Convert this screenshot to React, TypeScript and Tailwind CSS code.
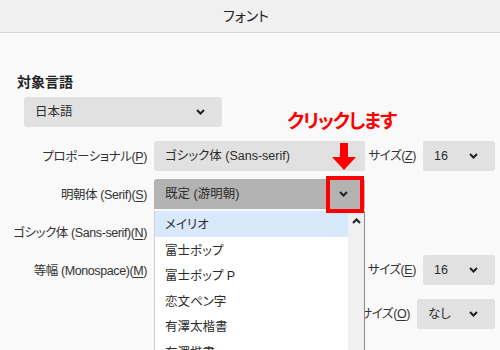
import type { ReactNode } from "react";

const FONT = { fontFamily: '"Liberation Sans", "Noto Sans CJK JP", sans-serif' };

function Chevron({ up = false }: { up?: boolean }) {
  return (
    <svg width="9" height="6" viewBox="0 0 9 6" className={up ? "rotate-180" : ""}>
      <path d="M1 1 L4.5 4.5 L8 1" fill="none" stroke="#222" strokeWidth="2" />
    </svg>
  );
}

function Select({
  value,
  className = "",
  active = false,
}: {
  value?: string;
  className?: string;
  active?: boolean;
}) {
  return (
    <div
      className={
        "h-[30px] flex items-center justify-between rounded-[3px] pl-[11px] pr-[17px] text-[12.5px] text-[#2b2b2b] " +
        (active ? "bg-[#b3b3b3] rounded-b-none" : "bg-[#e1e1e1]") +
        " " +
        className
      }
    >
      <span>{value}</span>
      <Chevron />
    </div>
  );
}

function Label({ text, k, className = "" }: { text: string; k: string; className?: string }) {
  return (
    <span className={"text-[12.5px] tracking-[-0.4px] text-[#333] whitespace-nowrap " + className}>
      {text}(<u className="underline-offset-2">{k}</u>)
    </span>
  );
}

function Row({ children, className = "" }: { children: ReactNode; className?: string }) {
  return <div className={"flex items-center h-[30px] pr-[5px] " + className}>{children}</div>;
}

const FONTS = ["メイリオ", "富士ポップ", "富士ポップ P", "恋文ペン字", "有澤太楷書", "有澤楷書"];

export default function App() {
  return (
    <div
      className="relative w-[500px] h-[350px] overflow-hidden bg-[#f9f9f9] [font-feature-settings:'palt']"
      style={FONT}
    >
      <div className="h-[33px] flex items-center justify-center bg-[#f0f0f0] border-b border-[#d6d6d6] text-[14px] text-[#222] pr-[8px]">
        フォント
      </div>

      <div className="pt-[38px]">
        <div className="pl-[17px] text-[14px] font-bold text-[#222] leading-[22px]">対象言語</div>
        <div className="pl-[24px] mt-[4px]">
          <Select value="日本語" className="w-[198px] pr-[15px]" />
        </div>

        <div className="mt-[14px] flex flex-col gap-[8px]">
          <Row>
            <div className="w-[147px] text-right">
              <Label text="プロポーショナル" k="P" />
            </div>
            <Select value="ゴシック体 (Sans-serif)" className="ml-[7px] w-[211px]" />
            <Label text="サイズ" k="Z" className="ml-auto" />
            <Select value="16" className="ml-[7px] w-[72px]" />
          </Row>
          <Row>
            <div className="w-[147px] text-right">
              <Label text="明朝体 (Serif)" k="S" />
            </div>
            <Select value="既定 (游明朝)" active className="ml-[7px] w-[211px]" />
          </Row>
          <Row>
            <div className="w-[147px] text-right">
              <Label text="ゴシック体 (Sans-serif)" k="N" />
            </div>
            <Select className="ml-[7px] w-[211px]" />
          </Row>
          <Row>
            <div className="w-[147px] text-right">
              <Label text="等幅 (Monospace)" k="M" />
            </div>
            <Select className="ml-[7px] w-[211px]" />
            <Label text="サイズ" k="E" className="ml-auto" />
            <Select value="16" className="ml-[7px] w-[72px]" />
          </Row>
          <Row className="mt-[6px]">
            <Label text="最小フォントサイズ" k="O" className="ml-auto" />
            <Select value="なし" className="ml-[7px] w-[78px]" />
          </Row>
        </div>
      </div>

      {/* open dropdown list */}
      <div className="absolute left-[154px] top-[211px] w-[211px] h-[150px] flex bg-white border-l border-[#d0d0d0] border-r border-r-[#8a8a8a]">
        <div className="flex-1">
          {FONTS.map((f, i) => (
            <div
              key={f}
              className={
                "h-[25.6px] flex items-center pl-[10px] pt-[3px] text-[12.5px] text-[#2b2b2b] " +
                (i === 0 ? "bg-[#d8e9fc]" : "")
              }
            >
              {f}
            </div>
          ))}
        </div>
        <div className="w-[16px] bg-[#f0f0f0] flex justify-center pt-[7px]">
          <Chevron up />
        </div>
      </div>

      {/* annotation */}
      <div className="absolute left-[287px] top-[108px] text-[19px] font-bold text-[#ff0000] tracking-[-1.2px] leading-[28px]">
        クリックします
      </div>
      <svg className="absolute left-[332px] top-[143px]" width="24" height="28" viewBox="0 0 24 28">
        <rect x="8" y="0" width="8" height="15" fill="#ff0000" />
        <polygon points="0,14 24,14 12,27" fill="#ff0000" />
      </svg>
      <div className="absolute left-[326px] top-[176px] w-[38px] h-[37px] border-[4px] border-[#ff0000]" />
    </div>
  );
}
